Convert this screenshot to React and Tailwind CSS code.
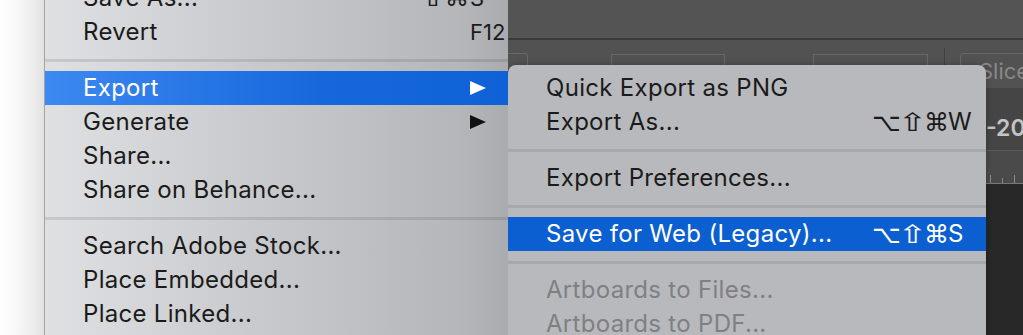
import React from "react";

const FONT = "font-['Inter','DejaVu_Sans',sans-serif]";
const GLYPH = "font-['DejaVu_Sans','Inter',sans-serif]";

function Tri({ white }) {
  return (
    <svg width="16" height="16" viewBox="0 0 16 16" className="block">
      <polygon points="0,1 16,8 0,15" fill={white ? "#ffffff" : "#111111"} />
    </svg>
  );
}

function Mod({ ch, w }) {
  const wide = ch === "⇧";
  return (
    <span className={w + " text-center inline-block"}>
      <span className={"inline-block " + (wide ? "scale-x-[1.45]" : "")}>{ch}</span>
    </span>
  );
}

function MainRow({ label, keyText, mods, arrow, active }) {
  return (
    <div
      className={
        "flex h-[34px] items-center " +
        (active
          ? "bg-[linear-gradient(90deg,#3d89f2_0%,#1767dc_60%,#0e62d6_100%)] text-white"
          : "text-[#1b1b1b]")
      }
    >
      <div className="pl-[38px] flex-1 text-[24px] leading-none tracking-[0.3px]">{label}</div>
      <div className="flex items-center">
        <div className={"flex " + GLYPH + " text-[24px] leading-none"}>
          {mods && mods.map((m, i) => <Mod key={i} ch={m} w="w-[24px]" />)}
        </div>
        <div className="w-[38px] ml-[1px] flex items-center text-[22px] leading-none">
          {arrow ? <Tri white={active} /> : keyText}
        </div>
      </div>
    </div>
  );
}

function SubRow({ label, mods, keyText, active, disabled }) {
  return (
    <div
      className={
        "flex h-[34px] items-center " +
        (active ? "bg-[#0b5fd0] text-white" : disabled ? "text-[#7f8083]" : "text-[#1b1b1b]")
      }
    >
      <div className="pl-[38px] flex-1 text-[24px] leading-none tracking-[0.3px]">{label}</div>
      {mods && (
        <div className="flex items-center">
          <div className={"flex " + GLYPH + " text-[25px] leading-none"}>
            <Mod ch={mods[0]} w="w-[28px]" />
            <Mod ch={mods[1]} w="w-[24px]" />
            <Mod ch={mods[2]} w="w-[22px]" />
          </div>
          <div className="w-[38px] ml-[2px] text-[24px] leading-none">{keyText}</div>
        </div>
      )}
      {!mods && <div className="w-[38px]" />}
    </div>
  );
}

function Sep({ light }) {
  return (
    <div className="h-[22px] flex items-center">
      <div className={"w-full h-[3px] " + (light ? "bg-black/[0.09]" : "bg-black/[0.1]")} />
    </div>
  );
}

export default function App() {
  return (
    <div className={"w-[1023px] h-[335px] overflow-hidden flex bg-white " + FONT}>
      {/* left shadow */}
      <div className="w-[45px] shrink-0 h-full bg-[linear-gradient(90deg,#ffffff_0%,#fafafa_30%,#ebebeb_80%,#e2e2e2_100%)] border-r border-[#a3a4a6]" />

      {/* main menu */}
      <div className="w-[463px] shrink-0 h-full bg-[linear-gradient(90deg,#dfe0e2_0%,#c9cacd_45%,#b5b6b9_90%,#aaabae_100%)]">
        <div className="-mt-[19px]">
          <MainRow label="Save As..." mods={["⇧", "⌘"]} keyText="S" />
          <MainRow label="Revert" keyText="F12" />
          <Sep />
          <MainRow label="Export" arrow active />
          <MainRow label="Generate" arrow />
          <MainRow label="Share..." />
          <MainRow label="Share on Behance..." />
          <Sep />
          <MainRow label="Search Adobe Stock..." />
          <MainRow label="Place Embedded..." />
          <MainRow label="Place Linked..." />
        </div>
      </div>

      {/* photoshop background + submenu */}
      <div className="relative flex-1 min-w-0 overflow-hidden h-full flex flex-col">
        <div className="h-[38px] bg-[#545454]" />
        <div className="h-[2px] bg-[#3a3a3a]" />
        <div className="h-[48px] bg-[#525252] flex items-start pt-[13px] text-[#7c7c7c] text-[20px] whitespace-nowrap">
          <div className="shrink-0 w-[20px] h-[40px] border border-l-0 border-[#6a6a6a] rounded-tr-[4px]" />
          <div className="shrink-0 ml-[19px] w-[64px] pt-[10px] leading-none">Width</div>
          <div className="shrink-0 w-[114px] h-[40px] border border-[#686868] mt-[1px]" />
          <div className="shrink-0 ml-[20px] w-[68px] pt-[10px] leading-none">Height</div>
          <div className="shrink-0 w-[115px] h-[40px] border border-[#686868] mt-[1px]" />
          <div className="shrink-0 ml-[16px] w-px h-[40px] bg-[#404040] -mt-[5px]" />
          <div className="shrink-0 ml-[15px] w-[80px] h-[36px] border border-[#686868] rounded-[4px] pl-[18px] pt-[6px] leading-none text-[#888888] text-[22px]">
            Slice
          </div>
        </div>
        <div className="h-[62px] bg-[#454545] flex items-center pl-[478px] pt-[18px] text-[#c4c4c4] text-[23px] font-semibold leading-none">
          -20
        </div>
        <div className="h-px bg-[#5a5a5a]" />
        <div className="h-[32px] bg-[#4a4a4a] flex items-end pl-[482px] gap-[11px]">
          <div className="w-px h-[8px] bg-[#8a8a8a]" />
          <div className="w-px h-[5px] bg-[#8a8a8a]" />
          <div className="w-px h-[8px] bg-[#8a8a8a]" />
        </div>
        <div className="h-px bg-[#777777]" />
        <div className="flex-1 bg-[#282828]" />

        {/* submenu */}
        <div className="absolute left-0 top-[65px] w-[478px] h-[290px] rounded-t-[8px] bg-[#b8b9bc] pt-[6px] shadow-[0_0_6px_rgba(0,0,0,0.25)]">
          <SubRow label="Quick Export as PNG" />
          <SubRow label="Export As..." mods={["⌥", "⇧", "⌘"]} keyText="W" />
          <Sep light />
          <SubRow label="Export Preferences..." />
          <Sep light />
          <SubRow label="Save for Web (Legacy)..." mods={["⌥", "⇧", "⌘"]} keyText="S" active />
          <Sep light />
          <SubRow label="Artboards to Files..." disabled />
          <SubRow label="Artboards to PDF..." disabled />
        </div>
      </div>
    </div>
  );
}
